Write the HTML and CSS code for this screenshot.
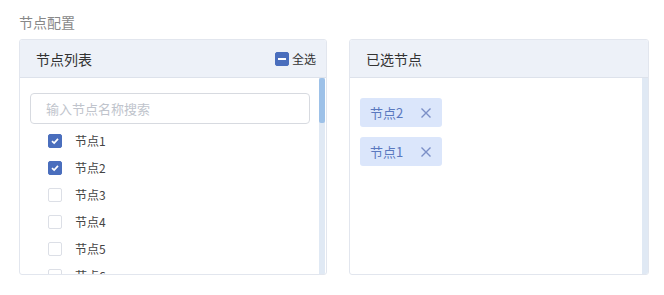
FILE: index.html
```html
<!DOCTYPE html>
<html lang="zh-CN">
<head>
  <meta charset="UTF-8">
  <title>节点配置</title>
  <link rel="stylesheet" href="styles.css">
</head>
<body>

<div class="config">
  <div class="config-title">节点配置</div>

  <div class="transfer">
    <!-- Left: node list -->
    <div class="panel panel-left">
      <div class="panel-header">
        <span>节点列表</span>
        <label class="check-all">
          <span class="box box-half"><span class="dash"></span></span>
          全选
        </label>
      </div>
      <div class="panel-body">
        <div class="panel-content">
          <div class="search">输入节点名称搜索</div>
          <div class="node-list">
            <div class="node-row"><span class="box box-on"><svg viewBox="0 0 14 14" width="14" height="14"><path d="M3.5 7.2 L6 9.5 L10.5 4.5" fill="none" stroke="#fff" stroke-width="2"/></svg></span>节点1</div>
            <div class="node-row"><span class="box box-on"><svg viewBox="0 0 14 14" width="14" height="14"><path d="M3.5 7.2 L6 9.5 L10.5 4.5" fill="none" stroke="#fff" stroke-width="2"/></svg></span>节点2</div>
            <div class="node-row"><span class="box"></span>节点3</div>
            <div class="node-row"><span class="box"></span>节点4</div>
            <div class="node-row"><span class="box"></span>节点5</div>
            <div class="node-row"><span class="box"></span>节点6</div>
          </div>
        </div>
        <div class="scrollbar"><div class="thumb"></div></div>
      </div>
    </div>

    <!-- Right: selected nodes -->
    <div class="panel panel-right">
      <div class="panel-header">
        <span>已选节点</span>
      </div>
      <div class="panel-body">
        <div class="panel-content tags">
          <div class="tag">节点2<svg class="tag-close" viewBox="0 0 12 12" width="12" height="12"><path d="M1.5 1.5 L10.5 10.5 M10.5 1.5 L1.5 10.5" stroke="#7b8fc7" stroke-width="1.4"/></svg></div>
          <div class="tag">节点1<svg class="tag-close" viewBox="0 0 12 12" width="12" height="12"><path d="M1.5 1.5 L10.5 10.5 M10.5 1.5 L1.5 10.5" stroke="#7b8fc7" stroke-width="1.4"/></svg></div>
        </div>
        <div class="scrollbar"></div>
      </div>
    </div>
  </div>
</div>

</body>
</html>
```

FILE: styles.css
```css
body {
  margin: 0;
  background: #fff;
  font-family: "Noto Sans CJK SC", "Liberation Sans", sans-serif;
  color: #333;
}
.config {
  padding: 12px 15px 0 19px;
}
.config-title {
  font-size: 14px;
  color: #888;
  line-height: 20px;
  margin-bottom: 7px;
}
.transfer {
  display: flex;
  gap: 22px;
}
.panel {
  height: 236px;
  border: 1px solid #e2e6ee;
  border-radius: 3px;
  box-sizing: border-box;
  display: flex;
  flex-direction: column;
  overflow: hidden;
}
.panel-left {
  width: 308px;
}
.panel-right {
  width: 300px;
}
.panel-header {
  height: 37px;
  flex-shrink: 0;
  background: #edf1f8;
  border-bottom: 1px solid #dde2eb;
  display: flex;
  align-items: center;
  justify-content: space-between;
  padding: 0 10px 0 16px;
  font-size: 14px;
  color: #333;
}
.check-all {
  display: flex;
  align-items: center;
  gap: 3px;
  font-size: 12px;
  color: #333;
}
.panel-body {
  flex: 1;
  display: flex;
  min-height: 0;
}
.panel-content {
  flex: 1;
  overflow: hidden;
}
.scrollbar {
  width: 6px;
  background: #e0e9f4;
}
.panel-left .scrollbar {
  margin-right: 1px;
}
.thumb {
  height: 45px;
  background: #9dc1e8;
  border-radius: 2px;
}
.search {
  margin: 15px 9px 0 10px;
  height: 31px;
  box-sizing: border-box;
  border: 1px solid #d7dae0;
  border-radius: 4px;
  padding-left: 15px;
  font-size: 13px;
  line-height: 29px;
  color: #c0c4cc;
}
.node-list {
  padding: 3px 0 0 28px;
}
.node-row {
  height: 27px;
  display: flex;
  align-items: center;
  font-size: 12px;
  color: #444;
}
.box {
  width: 14px;
  height: 14px;
  box-sizing: border-box;
  border: 1px solid #dcdfe6;
  border-radius: 2px;
  margin-right: 13px;
  display: flex;
  align-items: center;
  justify-content: center;
  background: #fff;
}
.box-on {
  background: #4a6ebd;
  border-color: #4a6ebd;
}
.box-half {
  margin-right: 0;
  background: #4a6ebd;
  border-color: #4a6ebd;
}
.dash {
  width: 8px;
  height: 2px;
  background: #fff;
}
.tags {
  padding: 20px 10px;
  display: flex;
  flex-direction: column;
  align-items: flex-start;
  gap: 10px;
}
.tag {
  height: 29px;
  padding: 0 10px;
  background: #dbe6fb;
  border-radius: 3px;
  display: flex;
  align-items: center;
  font-size: 13px;
  color: #5a78bf;
}
.tag-close {
  margin-left: 17px;
}
```
